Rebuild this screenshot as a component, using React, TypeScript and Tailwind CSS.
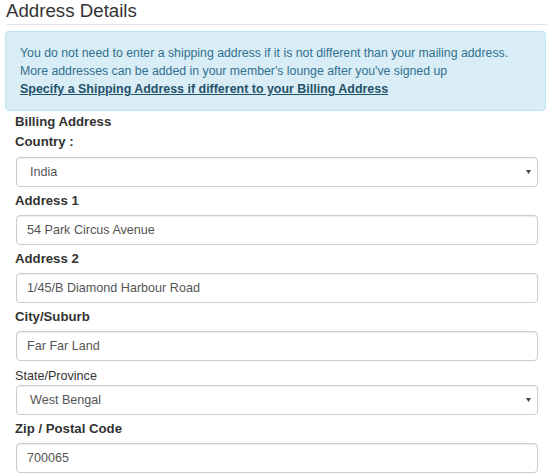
import React from "react";

const font = { fontFamily: '"Liberation Sans", Arial, sans-serif' };

function Label({ children, bold = true }: { children: React.ReactNode; bold?: boolean }) {
  return (
    <div className={`ml-[10px] mt-[5px] mb-[5px] h-[18px] leading-[18px] text-[13.2px] text-[#333] ${bold ? "font-bold" : "font-normal"}`}>
      {children}
    </div>
  );
}

function Input({ value }: { value: string }) {
  return (
    <div className="ml-[11px] mr-[8px] h-[30px] rounded-[4px] border border-[#ccc] bg-white pl-[10px] flex items-center text-[12.6px] text-[#555] shadow-[inset_0_1px_1px_rgba(0,0,0,0.075)]">
      {value}
    </div>
  );
}

function Select({ value }: { value: string }) {
  return (
    <div className="ml-[11px] mr-[8px] h-[30px] rounded-[4px] border border-[#ccc] bg-white pl-[13px] pr-[6px] flex items-center justify-between text-[12.6px] text-[#555] shadow-[inset_0_1px_1px_rgba(0,0,0,0.075)]">
      <span>{value}</span>
      <svg width="5" height="4" viewBox="0 0 5 4">
        <polygon points="0,0 5,0 2.5,4" fill="#444" />
      </svg>
    </div>
  );
}

export default function App() {
  return (
    <div className="w-[547px] h-[476px] bg-white overflow-hidden pl-[5px] pr-[1px]" style={font}>
      <div className="pl-px h-[24px] text-[18.7px] leading-[22px] text-[#333]">Address Details</div>
      <div className="ml-px -mr-px h-px bg-[#e5e5e5]" />
      <div className="mt-[6px] rounded-[4px] border border-[#bce8f1] bg-[#d9edf7] pl-[14px] pt-[12px] pb-[12px] text-[12.3px] leading-[18px] text-[#31708f]">
        <div>You do not need to enter a shipping address if it is not different than your mailing address.</div>
        <div>More addresses can be added in your member's lounge after you've signed up</div>
        <div>
          <span className="font-bold underline text-[12.45px] text-[#245269]">Specify a Shipping Address if different to your Billing Address</span>
        </div>
      </div>
      <div className="ml-[10px] mt-[2px] h-[18px] leading-[18px] text-[13.2px] font-bold text-[#333]">Billing Address</div>
      <div className="ml-[10px] mt-[2px] mb-[6px] h-[18px] leading-[18px] text-[13.2px] font-bold text-[#333]">Country :</div>
      <Select value="India" />
      <Label>Address 1</Label>
      <Input value="54 Park Circus Avenue" />
      <Label>Address 2</Label>
      <Input value="1/45/B Diamond Harbour Road" />
      <Label>City/Suburb</Label>
      <Input value="Far Far Land" />
      <div className="ml-[10px] mt-[6px] h-[18px] leading-[18px] text-[12.6px] text-[#333]">State/Province</div>
      <Select value="West Bengal" />
      <Label>Zip / Postal Code</Label>
      <Input value="700065" />
    </div>
  );
}
